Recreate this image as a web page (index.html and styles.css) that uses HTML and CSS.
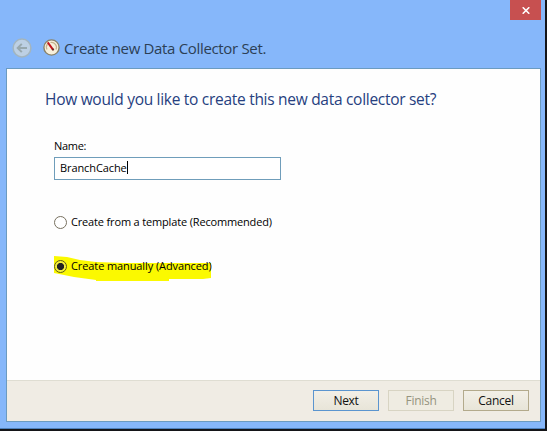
FILE: index.html
```
<!DOCTYPE html>
<html lang="en">
<head>
    <meta charset="UTF-8">
    <title>Create new Data Collector Set</title>
    <link rel="stylesheet" href="styles.css">
</head>
<body>
    <div class="window">
        <div class="titlebar">
            <button class="close" aria-label="Close">
                <svg width="8" height="7" viewBox="0 0 8 7"><path d="M0.7 0.3L7.3 6.7M7.3 0.3L0.7 6.7" stroke="#fff" stroke-width="1.6"/></svg>
            </button>
        </div>
        <div class="header">
            <svg class="back" width="20" height="20" viewBox="0 0 20 20">
                <circle cx="10" cy="10" r="8.9" fill="#bdd0e4" stroke="#a3b5bf" stroke-width="1.5"/>
                <path d="M15 10H6M9.8 5.9L5.7 10L9.8 14.1" fill="none" stroke="#98a8ae" stroke-width="2"/>
            </svg>
            <svg class="gauge" width="17" height="17" viewBox="0 0 17 17">
                <circle cx="8.5" cy="8.5" r="7.6" fill="#f7f0dc" stroke="#8a8369" stroke-width="1.4"/>
                <path d="M4 10.5A5 5 0 0 1 4.5 5M7.5 3.5A5 5 0 0 1 13 10.5" fill="none" stroke="#c5b48f" stroke-width="1.2"/>
                <path d="M4.7 3.3L10 10.6" stroke="#c3171c" stroke-width="2"/>
                <path d="M9.4 9.8L10.6 11.4" stroke="#6b2a20" stroke-width="1.8"/>
            </svg>
            <span class="title">Create new Data Collector Set.</span>
        </div>
        <div class="panel">
            <div class="content">
                <h1>How would you like to create this new data collector set?</h1>
                <label class="name-label" for="name">Name:</label>
                <div class="field" id="name"><span class="value">BranchCache</span><span class="caret"></span></div>
                <div class="option">
                    <span class="radio"></span>
                    <span class="text-template">Create from a template (Recommended)</span>
                </div>
                <div class="option marked">
                    <svg class="marker" width="158" height="27" viewBox="0 0 158 27"><path d="M0 1L13 2L26 5L42 7L70 8H157V23L149 24L115 24V26H42V25L20 22L0 18Z" fill="#fbf900"/></svg>
                    <span class="radio checked"></span>
                    <span class="text-manual">Create manually (Advanced)</span>
                </div>
            </div>
            <div class="footer">
                <button class="btn next">Next</button>
                <button class="btn finish" disabled>Finish</button>
                <button class="btn">Cancel</button>
            </div>
        </div>
    </div>
</body>
</html>
```
FILE: styles.css
```
* {
    box-sizing: border-box;
}
body {
    margin: 0;
    height: 431px;
    background: #141518;
    font-family: "Open Sans", "Noto Sans", sans-serif;
    font-size: 11px;
    color: #000;
    overflow: hidden;
}
.window {
    width: 545px;
    height: 429px;
    padding: 0 4px 6px 6px;
    background: #86b7fa;
    border-bottom: 1px solid #4f82bd;
    display: flex;
    flex-direction: column;
}
.titlebar {
    display: flex;
    justify-content: flex-end;
    height: 37px;
}
.close {
    width: 31px;
    height: 20px;
    padding: 1px 0 0;
    border: none;
    background: #c75050;
    display: flex;
    align-items: center;
    justify-content: center;
}
.header {
    display: flex;
    align-items: center;
    height: 31px;
    padding: 0 0 10px 6px;
}
.gauge {
    margin-left: 11px;
}
.title {
    margin-left: 4px;
    font-size: 15px;
    line-height: 20px;
    letter-spacing: -0.33px;
    color: #2c3f55;
    white-space: nowrap;
}
.panel {
    flex: 1;
    border: 1px solid #6c9bc0;
    background: #fefefe;
    display: flex;
    flex-direction: column;
}
.content {
    flex: 1;
    padding: 19px 0 0 47px;
}
h1 {
    margin: 0 0 0 -9px;
    font-size: 15.5px;
    font-weight: normal;
    line-height: 22px;
    letter-spacing: -0.29px;
    color: #26407f;
    white-space: nowrap;
}
.name-label {
    display: block;
    margin-top: 28px;
    line-height: 16px;
    letter-spacing: -0.3px;
}
.field {
    display: flex;
    align-items: center;
    width: 227px;
    height: 23px;
    margin-top: 3px;
    padding: 0 0 3px 5px;
    border: 1px solid #6f9dba;
    background: #fff;
}
.value {
    letter-spacing: -0.1px;
}
.caret {
    width: 1px;
    height: 13px;
    background: #000;
}
.option {
    display: flex;
    align-items: center;
    position: relative;
    height: 16px;
    margin-top: 34px;
    line-height: 16px;
    white-space: nowrap;
}
.marked {
    margin-top: 28px;
}
.marker {
    position: absolute;
    left: 0;
    top: -3px;
}
.radio {
    position: relative;
    width: 13px;
    height: 13px;
    margin-right: 4px;
    border: 1px solid #77705f;
    border-radius: 50%;
    background: #fff;
}
.checked {
    border-color: #5d5a16;
    background: radial-gradient(circle, #222 3.2px, #f4ef3a 4px);
}
.text-template,
.text-manual {
    position: relative;
    letter-spacing: -0.16px;
}
.text-manual {
    letter-spacing: -0.1px;
}
.footer {
    display: flex;
    justify-content: flex-end;
    gap: 9px;
    height: 41px;
    padding: 9px 11px 0 0;
    border-top: 1px solid #dfddd2;
    background: #f0ece4;
}
.btn {
    width: 66px;
    height: 21px;
    padding: 0;
    border: 1px solid #b3aa8c;
    background: linear-gradient(#f2efe7, #e8e5d8);
    font: 12px/18px "Open Sans", "Noto Sans", sans-serif;
    letter-spacing: -0.3px;
    color: #111;
}
.next {
    border-color: #5b95cf;
}
.finish {
    border-color: #d8d4c3;
    background: #efece2;
    color: #96947f;
}
```
